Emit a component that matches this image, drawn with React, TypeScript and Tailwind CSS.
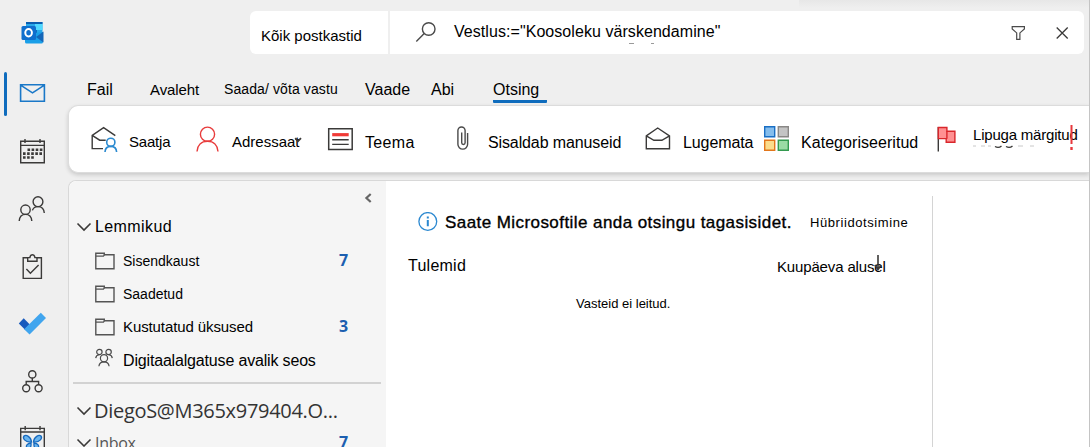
import type { ReactNode } from "react";

interface IconProps {
  className?: string;
  w?: number;
  h?: number;
  stroke?: string;
  children: ReactNode;
}

function Icon({ className = "", w = 28, h = 28, stroke = "#3b3a39", children }: IconProps) {
  return (
    <svg
      className={`block shrink-0 ${className}`}
      width={w}
      height={h}
      viewBox={`0 0 ${w} ${h}`}
      fill="none"
      stroke={stroke}
      strokeWidth={1.4}
    >
      {children}
    </svg>
  );
}

function OutlookLogo() {
  return (
    <Icon className="mt-[18px] ml-[18px]" stroke="none">
      <path d="M8 4h16.500v11H8z" fill="#28a8ea" />
      <path d="M8 4h16.500v2H8z" fill="#0a5eb0" />
      <path d="M17 6h7.500v6H17z" fill="#50d9ff" />
      <path d="M10 12h9v6h-9z" fill="#0f6cbd" />
      <path d="M7 16l18-2v10a1.500 1.500 0 0 1-1.500 1.500h-15A1.500 1.500 0 0 1 7 24z" fill="#1a9fe8" />
      <path d="M25.500 13.500v11L18 19z" fill="#1466b8" />
      <rect x="3.500" y="8" width="14.500" height="14" rx="1.500" fill="#0f6fce" />
      <ellipse cx="10.600" cy="14.800" rx="3.300" ry="3.700" stroke="#fff" strokeWidth="2" />
    </Icon>
  );
}

function Rail() {
  return (
    <nav className="w-[68px] shrink-0 flex flex-col">
      <OutlookLogo />
      <div className="flex items-center mt-[26px] ml-1 h-11">
        <div className="w-[3px] h-11 rounded-full bg-[#0f6cbd]" />
        <Icon className="ml-[11px] -mt-[2px]" stroke="#1a78c8">
          <path d="M2.600 5.700h23.800v16.600H2.600zM2.600 6.200l11.900 7.600 11.900-7.600" strokeWidth="1.600" />
        </Icon>
      </div>
      {/* Calendar */}
      <Icon className="mt-[22px] ml-[18px]">
        <path d="M2.700 3.200h23.600v21.500H2.700zM2.700 7.400h23.600M7 1v4M22 1v4" />
        <path d="M9.500 11.700h15M5 15.600h19.500M5 19.500h12" strokeWidth="2.600" strokeDasharray="2.600 1.500" />
      </Icon>
      {/* People */}
      <Icon className="mt-[29px] ml-[18px]">
        <circle cx="7.500" cy="14.700" r="4.700" />
        <path d="M1.200 26c.3-3.900 2.600-6.600 6.300-6.600s6 2.700 6.300 6.600" />
        <circle cx="20" cy="6.700" r="4.900" />
        <path d="M14.400 15.400c.8-2.400 2.800-3.800 5.600-3.800 3.700 0 6 2.600 6.300 6.400" />
      </Icon>
      {/* Tasks */}
      <Icon className="mt-[30px] ml-[18px]">
        <path d="M10 4.700H5.200v20.700h18.200V4.700h-4.700" />
        <path d="M9.700 8.200V4.600h2.200c.2-1.900 1-2.900 2.500-2.900s2.300 1 2.500 2.900H19v3.600zM8.400 16l4 4.300 8.200-8.300" />
      </Icon>
      {/* To Do */}
      <Icon className="mt-[29px] ml-[18px]" stroke="none">
        <path d="M5.700 8.300L.8 13.600l6 6 5-5.200z" fill="#185abd" />
        <path d="M22.800 2.800l5.200 5.300L11.600 24.600l-5.500-5.400z" fill="#41a5ee" />
      </Icon>
      {/* Org chart */}
      <Icon className="mt-[30px] ml-[18px]">
        <circle cx="14.300" cy="6.400" r="3.600" />
        <circle cx="8.200" cy="20.300" r="3.500" />
        <circle cx="20.600" cy="20.300" r="3.500" />
        <path d="M14.300 10v3.500M8.200 16.800v-3.300h12.400v3.300" />
      </Icon>
      {/* Calendar with butterfly */}
      <Icon className="mt-[29px] ml-[18px]">
        <path d="M2.700 30V3.400h23.600V30M2.700 7h23.600M7.200 1v4.300M22 1v4.300" />
        <g stroke="#1769bd" fill="#69b4ee" strokeWidth="1.300">
          <path d="M13.500 17C13 11.500 8 9.500 6 11c-1.500 2 .5 6.500 7.500 6zM15.500 17c.5-5.500 5.500-7.500 7.500-6 1.500 2-.5 6.500-7.500 6z" />
          <path d="M13 18c-4 .500-5.500 3-4 5s4.500.5 4-5zM16 18c4 .500 5.500 3 4 5s-4.500.5-4-5z" />
        </g>
      </Icon>
    </nav>
  );
}

function SearchBar() {
  return (
    <div className="flex gap-[2px] mt-[11px] ml-[182px] h-[43px]">
      <div className="w-[138px] shrink-0 bg-white rounded-l-md pl-[11px] pt-[7px] text-[15px] leading-[36px]">
        Kõik postkastid
      </div>
      <div className="w-[694px] shrink-0 bg-white rounded-r-md flex">
        <Icon className="ml-[24px] mt-[9px]" w={24} h={24} stroke="#4a4a4a">
          <circle cx="14.700" cy="9" r="6.300" />
          <path d="M10.200 13.600L2.300 21.600" />
        </Icon>
        <div className="ml-[16px] w-[270px] flex flex-col">
          <span className="leading-[32px] mt-[5px] h-[30px] tracking-[0.06px]">Vestlus:="Koosoleku värskendamine"</span>
          {/* descender marks under the query */}
          <Icon className="-mt-[4px] ml-[174px]" w={30} h={3} stroke="#9a9a9a">
            <path d="M1 1.500h5M23 1.500h3" strokeWidth="1" />
          </Icon>
        </div>
        <Icon className="ml-[285px] mt-[13px]" w={18} h={18} stroke="#4a4a4a">
          <path d="M3.200 2.700h12.200v2.200l-4.500 4v6.400H7.700V8.900l-4.500-4z" strokeWidth="1.200" />
        </Icon>
        <Icon className="ml-[27px] mt-[13px]" w={18} h={18}>
          <path d="M2.700 3.500L13.700 14.500M13.700 3.500L2.700 14.500" strokeWidth="1.300" />
        </Icon>
      </div>
    </div>
  );
}

function Tabs() {
  return (
    <div className="flex pl-[19px] mt-[25px] h-[27px] leading-[22px] whitespace-nowrap">
      <span className="w-[63px]">Fail</span>
      <span className="w-[74px] text-[15px] leading-[21px] tracking-[-0.1px]">Avaleht</span>
      <span className="w-[141px] text-[14px] leading-[20px] tracking-[0.1px]">Saada/ võta vastu</span>
      <span className="w-[66px]">Vaade</span>
      <span className="w-[62px]">Abi</span>
      <span className="w-[54px] h-[24px] border-b-[3px] border-[#0f6cbd] rounded-[1px]">Otsing</span>
    </div>
  );
}

function Ribbon() {
  return (
    <div className="h-[68px] shrink-0 bg-white rounded-l-[10px] border border-r-0 border-[#dcdcdc] shadow-[0_2px_4px_rgba(0,0,0,0.16)] flex items-center pl-[20px] whitespace-nowrap">
      <Icon w={30} h={30}>
        <path d="M14 24.600H3.200V11.400L14.600 3.600l11.700 8.100M3.200 11.400l7.500 4.800h6" />
        <g stroke="#2b8ad0" strokeWidth="1.600">
          <circle cx="21.800" cy="18.300" r="4.100" />
          <path d="M16 28c.2-3.600 2.300-5.600 5.800-5.600s5.600 2 5.800 5.600" />
        </g>
      </Icon>
      <span className="ml-[10px] w-[65px] mt-[7px] text-[15px] tracking-[-0.2px]">Saatja</span>
      <Icon w={28} h={30} stroke="#e83b3b">
        <circle cx="13.500" cy="10.200" r="7.100" />
        <path d="M3 27.500c.4-6.200 4.300-10.200 10.500-10.200S23.600 21.300 24 27.500" />
      </Icon>
      <span className="ml-[10px] w-[66px] mt-[7px] text-[15px]">Adressaat</span>
      <Icon className="-ml-[4px] mr-[4px] mt-[1px]" w={10} h={10}>
        <path d="M1.200 3.200L4 6.200 7 3.200" strokeWidth="1.800" />
      </Icon>
      <Icon className="ml-[17px]" w={30} h={30}>
        <path d="M3.700 4.700h23.500v20.800H3.700z" strokeWidth="1.500" />
        <path d="M7.200 10.700h16.500" stroke="#f03a36" strokeWidth="3.200" />
        <path d="M7.200 15.700h16.500M7.200 20.400h16.500" />
      </Icon>
      <span className="ml-[10px] w-[83px] mt-[7px] tracking-[0.35px]">Teema</span>
      <Icon className="ml-[5px]" w={22} h={30} stroke="#4a4a4a">
        <path d="M14.600 9v11.300a4.800 4.800 0 0 1-9.700 0V6.600a3.600 3.600 0 0 1 7.200 0v12.200a1.700 1.700 0 0 1-3.400 0V8.500" />
      </Icon>
      <span className="ml-[13px] w-[155px] mt-[7px] tracking-[-0.12px]">Sisaldab manuseid</span>
      <Icon w={30} h={30}>
        <path d="M3.300 11.800L14.700 4l11.800 7.800v13H3.300zM3.300 11.800l7.600 4.500h8l7.600-4.500" />
      </Icon>
      <span className="ml-[10px] w-[79px] mt-[7px] tracking-[-0.1px]">Lugemata</span>
      <Icon w={30} h={30}>
        <path d="M2.700 2.700h10v10h-10z" fill="#85bdec" stroke="#1a6fc4" />
        <path d="M16.300 2.700h10v10h-10z" fill="#c4c4c4" stroke="#8a8886" />
        <path d="M2.700 16.300h10v10h-10z" fill="#fbdc8c" stroke="#e2761b" />
        <path d="M16.300 16.300h10v10h-10z" fill="#9bdba5" stroke="#349a50" />
      </Icon>
      <span className="ml-[9px] w-[133px] mt-[7px] tracking-[0.05px]">Kategoriseeritud</span>
      <Icon w={26} h={30}>
        <path d="M4.300 3v24.500" />
        <path d="M4.300 3.500h8.600v3.700h8v11h-8.700v-3.600H4.300z" fill="#ff9092" stroke="#d9262b" />
        <path d="M12.900 7.200v7.500" stroke="#d9262b" />
      </Icon>
      <span className="ml-[13px] w-[108px] -mt-[8px] text-[15px] tracking-[-0.2px] relative">
        Lipuga märgitud
        <svg className="absolute left-0 top-[21px]" width="66" height="6" fill="none" stroke="#3b3a39">
          <path d="M0 1h3M8 1h4M15 1h3M45 1h5M57 1h4" stroke="#c8c8c8" />
          <path d="M22 1.500q3.500 2 6.500-.5M33 1.500q3.500 2 6.500-.5" strokeWidth="1.400" />
        </svg>
        <svg className="absolute left-[97px] top-[1px]" width="4" height="26" fill="#e8383d">
          <path d="M.5 0h2v19h-2zM.3 22h2.400v3H.3z" />
        </svg>
      </span>
    </div>
  );
}

function Chevron({ className = "" }: { className?: string }) {
  return (
    <Icon className={className} w={16} h={10}>
      <path d="M1.500 1.500L8 8l6.500-6.500" strokeWidth="1.600" />
    </Icon>
  );
}

function FolderIcon() {
  return (
    <Icon className="-mt-[2px]" w={20} h={18} stroke="#555">
      <path d="M.8 1.200h8.500v1.500H19v14H.8z" strokeWidth="1.400" />
      <path d="M.8 4.200h7.700l1-1.500" strokeWidth="1.200" />
    </Icon>
  );
}

const COUNT = "ml-auto w-[47px] -mt-[3px] font-['Open_Sans'] font-bold text-[16px] text-[#1c5fb0]";

function FolderPane() {
  return (
    <aside className="w-[317px] shrink-0 bg-[#f5f5f5] rounded-tl-lg flex flex-col whitespace-nowrap">
      <Icon className="ml-[294px] mt-[12px]" w={10} h={10} stroke="#666">
        <path d="M7.700 1L3.400 5l4.300 4" strokeWidth="2.200" />
      </Icon>
      <div className="flex items-center shrink-0 h-[34px] mt-[7px]">
        <Chevron className="ml-[7px]" />
        <span className="ml-[3px] tracking-[0.4px]">Lemmikud</span>
      </div>
      <div className="flex items-center shrink-0 h-[33px] pl-[26px] mt-[1px] text-[14px]">
        <FolderIcon />
        <span className="ml-2">Sisendkaust</span>
        <span className={COUNT}>7</span>
      </div>
      <div className="flex items-center shrink-0 h-[33px] pl-[26px] text-[14px]">
        <FolderIcon />
        <span className="ml-2">Saadetud</span>
      </div>
      <div className="flex items-center shrink-0 h-[33px] pl-[26px] text-[15px]">
        <FolderIcon />
        <span className="ml-2 tracking-[-0.1px]">Kustutatud üksused</span>
        <span className={COUNT}>3</span>
      </div>
      <div className="flex items-center shrink-0 h-[34px] pl-[26px]">
        <Icon className="-mt-[6px]" w={20} h={20} stroke="#4a4a4a">
          <g strokeWidth="1.200">
            <circle cx="4.400" cy="4" r="2.700" />
            <circle cx="13.600" cy="4" r="2.700" />
            <circle cx="9" cy="10.200" r="3.600" />
            <path d="M.7 10.200c.3-2.200 1.500-3.300 3.700-3.500M17.300 10.200c-.3-2.200-1.500-3.300-3.700-3.500M3.900 18.200c.3-2.700 1.900-4.400 5.100-4.400s4.800 1.700 5.100 4.400" />
          </g>
        </Icon>
        <span className="ml-2 tracking-[-0.17px]">Digitaalalgatuse avalik seos</span>
      </div>
      <div className="ml-[4px] mr-[5px] mt-[4px] h-[2px] shrink-0 bg-[#d2d2d2]" />
      <div className="flex items-center h-[36px] mt-[9px] shrink-0 font-['Open_Sans'] text-[20px] text-[#333]">
        <Chevron className="ml-[7px]" />
        <span className="ml-[2px] tracking-[-0.3px]">DiegoS@M365x979404.O...</span>
      </div>
      <div className="flex items-center h-[28px] shrink-0 font-['Open_Sans'] text-[16px] text-[#555]">
        <Chevron className="ml-[7px]" />
        <span className="ml-[3px] tracking-[-0.3px]">Inbox</span>
        <span className={COUNT}>7</span>
      </div>
    </aside>
  );
}

function Results() {
  return (
    <main className="w-[546px] shrink-0 whitespace-nowrap">
      <div className="flex items-center mt-[28px] h-[26px] pl-[32px]">
        <Icon w={20} h={20} stroke="#2b88d0">
          <circle cx="9.800" cy="9.500" r="8.900" strokeWidth="1.300" />
          <path d="M9.800 8v6.300M9.800 4.500v2" strokeWidth="2" />
        </Icon>
        <span className="ml-[7px] w-[365px] mt-[2px] text-[17px] tracking-[0.43px] [-webkit-text-stroke:0.35px_black]">
          Saate Microsoftile anda otsingu tagasisidet.
        </span>
        <span className="text-[13px] mt-[1px] tracking-[0.58px]">Hübriidotsimine</span>
      </div>
      <div className="flex items-center mt-[18px] h-[26px] pl-[22px]">
        <span className="w-[369px] tracking-[0.25px]">Tulemid</span>
        <span className="relative text-[15px] tracking-[-0.15px] mt-[2px]">
          Kuupäeva alusel
          <svg className="absolute left-[97px] -top-[2px]" width="8" height="18" fill="none" stroke="#3b3a39">
            <path d="M4 1v15M.8 11l3.200 4.500L7.200 11" strokeWidth="1.600" />
          </svg>
        </span>
      </div>
      <div className="mt-[14px] pl-[190px] text-[13px] leading-[22px]">Vasteid ei leitud.</div>
    </main>
  );
}

export default function App() {
  return (
    <div className="relative flex w-[1090px] h-[447px] overflow-hidden bg-[#efefef] text-[16px] text-black font-['Liberation_Sans',sans-serif]">
      {/* Soft shade along the top right edge */}
      <div className="absolute top-0 right-px w-[290px] h-[8px] bg-linear-to-b from-[#e7e7e7] to-[#efefef]" />
      <Rail />
      <div className="w-[1021px] shrink-0 flex flex-col">
        <SearchBar />
        <Tabs />
        <Ribbon />
        <div className="mt-[7px] flex grow min-h-0 bg-white border-l border-t border-[#d8d8d8] rounded-tl-lg">
          <FolderPane />
          <Results />
          <div className="w-px mt-[15px] bg-[#d4d4d4]" />
        </div>
      </div>
      <div className="w-px bg-[#c4c4c4]" />
    </div>
  );
}
